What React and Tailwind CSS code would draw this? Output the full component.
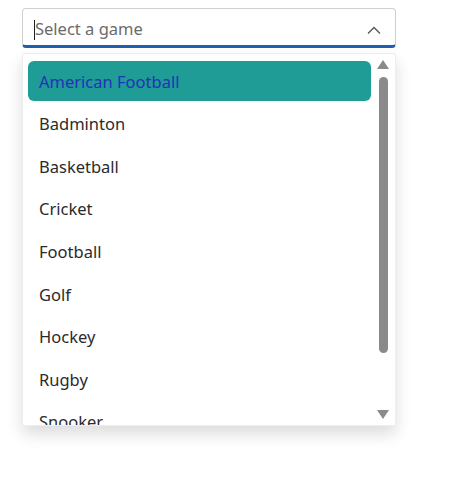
import React from 'react'

const games = ['American Football', 'Badminton', 'Basketball', 'Cricket', 'Football', 'Golf', 'Hockey', 'Rugby', 'Snooker']

export default function App() {
    return (
        <div className="w-[450px] h-[477px] bg-white pt-2 pl-[22px]" style={{ fontFamily: '"Noto Sans", sans-serif' }}>
            {/* combo input */}
            <div className="w-[374px] h-[40px] flex items-center rounded-[4px] border border-[#cfcfcf] border-b-[3px] border-b-[#1f5fae] pl-[11px] pr-[14px] pt-[5px]">
                <span className="w-px h-[20px] bg-[#222]" />
                <span className="flex-1 text-[16.5px] text-[#6b6b6b] leading-none">Select a game</span>
                <svg width="14" height="8" viewBox="0 0 14 8" fill="none" stroke="#555" strokeWidth="1.3">
                    <path d="M1 7.5 L7 1.5 L13 7.5" />
                </svg>
            </div>

            {/* dropdown popup */}
            <div className="mt-[5px] w-[374px] h-[373px] flex bg-white border border-[#eeeeee] rounded-[2px] shadow-[0_8px_16px_rgba(0,0,0,0.14)] overflow-hidden">
                <ul className="flex-1 flex flex-col gap-[2.6px] pl-[5px] pt-[7px]">
                    {games.map((g, i) => (
                        <li
                            key={g}
                            className={
                                i === 0
                                    ? 'shrink-0 h-[40px] flex items-center pl-[11px] pt-[2px] rounded-[6px] bg-[#1f9c95] text-[16.5px] text-[#2132b8]'
                                    : 'shrink-0 h-[40px] flex items-center pl-[11px] pt-[2px] text-[16.5px] text-[#2b2b2b]'
                            }
                        >
                            {g}
                        </li>
                    ))}
                </ul>
                {/* scrollbar */}
                <div className="w-[24px] flex flex-col items-center pt-[6px] pb-[6px]">
                    <svg width="12" height="9" viewBox="0 0 12 9"><path d="M6 0 L12 9 L0 9 Z" fill="#8a8a8a" /></svg>
                    <div className="mt-[8px] w-[9px] h-[276px] rounded-full bg-[#8a8a8a]" />
                    <div className="flex-1" />
                    <svg width="12" height="9" viewBox="0 0 12 9"><path d="M0 0 L12 0 L6 9 Z" fill="#8a8a8a" /></svg>
                </div>
            </div>
        </div>
    )
}
